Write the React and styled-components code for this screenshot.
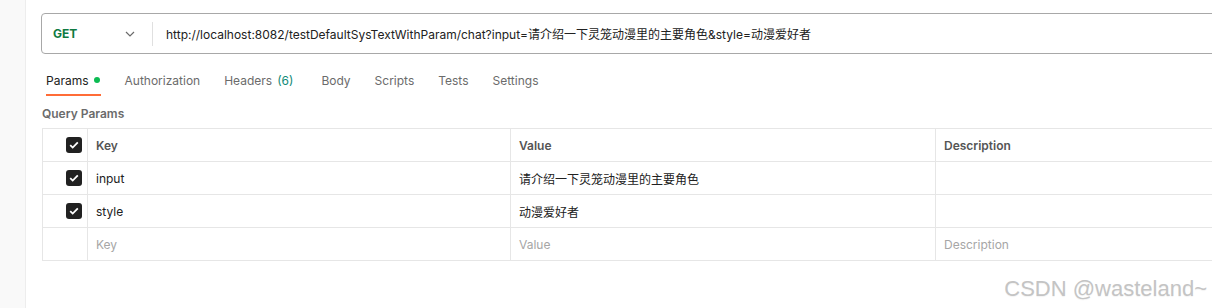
import React from "react";
import styled, { createGlobalStyle } from "styled-components";

const GlobalStyle = createGlobalStyle`
  body {
    margin: 0;
    background: #ffffff;
    font-family: Inter, "Noto Sans CJK SC", sans-serif;
    color: #212121;
  }
`;

const params = [
  { key: "input", value: "请介绍一下灵笼动漫里的主要角色", checked: true },
  { key: "style", value: "动漫爱好者", checked: true },
];

const tabs = ["Params", "Authorization", "Headers", "Body", "Scripts", "Tests", "Settings"];

const App = () => {
  return (
    <Page>
      <GlobalStyle />
      <Sidebar />
      <Main>
        <UrlBar>
          <Method>
            GET
            <svg width="10" height="6" viewBox="0 0 10 6" fill="none">
              <path d="M1 1l4 4 4-4" stroke="#6b6b6b" strokeWidth="1.2" />
            </svg>
          </Method>
          <Divider />
          <UrlText>
            http://localhost:8082/testDefaultSysTextWithParam/chat?input=请介绍一下灵笼动漫里的主要角色&style=动漫爱好者
          </UrlText>
        </UrlBar>

        <Tabs>
          {tabs.map((t) => (
            <Tab key={t} active={t === "Params"}>
              {t}
              {t === "Params" && <Dot />}
              {t === "Headers" && <Count>(6)</Count>}
            </Tab>
          ))}
        </Tabs>

        <SectionTitle>Query Params</SectionTitle>

        <Table>
          <Cell>
            <Check />
          </Cell>
          <Cell head>Key</Cell>
          <Cell head>Value</Cell>
          <Cell head>Description</Cell>

          {params.map((p) => (
            <React.Fragment key={p.key}>
              <Cell>
                <Check />
              </Cell>
              <Cell>{p.key}</Cell>
              <Cell>{p.value}</Cell>
              <Cell />
            </React.Fragment>
          ))}

          <Cell />
          <Cell placeholder>Key</Cell>
          <Cell placeholder>Value</Cell>
          <Cell placeholder>Description</Cell>
        </Table>
      </Main>
      <Watermark>CSDN @wasteland~</Watermark>
    </Page>
  );
};

const Check = () => (
  <CheckBox>
    <svg width="10" height="8" viewBox="0 0 10 8" fill="none">
      <path d="M1.2 4.2l2.5 2.4L8.8 1.4" stroke="#ffffff" strokeWidth="1.8" />
    </svg>
  </CheckBox>
);

export default App;

const Page = styled.div`
  position: relative;
  display: flex;
  width: 1212px;
  height: 308px;
  overflow: hidden;
`;

const Sidebar = styled.div`
  width: 25px;
  flex-shrink: 0;
  background: #f9f9f9;
  border-right: 1px solid #ededed;
`;

const Main = styled.div`
  flex: 1;
  min-width: 0;
  padding: 13px 0 0 15px;
  overflow: hidden;
`;

const UrlBar = styled.div`
  display: flex;
  align-items: center;
  width: 1220px;
  height: 39px;
  border: 1px solid #a8a8a8;
  border-radius: 4px;
`;

const Method = styled.div`
  width: 110px;
  display: flex;
  align-items: center;
  justify-content: space-between;
  padding: 0 17px 0 11px;
  box-sizing: border-box;
  font-size: 12px;
  font-weight: 700;
  color: #0f7a42;
`;

const Divider = styled.div`
  width: 1px;
  height: 24px;
  background: #e0e0e0;
`;

const UrlText = styled.div`
  padding-left: 13px;
  font-size: 12px;
  color: #212121;
  white-space: nowrap;
`;

const Tabs = styled.div`
  display: flex;
  gap: 24px;
  margin: 12px 0 0 5px;
`;

const Tab = styled.div`
  display: flex;
  align-items: center;
  height: 28px;
  font-size: 12px;
  color: ${(p) => (p.active ? "#212121" : "#6b6b6b")};
  border-bottom: 2px solid ${(p) => (p.active ? "#ff6c37" : "transparent")};
  white-space: nowrap;
`;

const Dot = styled.span`
  width: 6px;
  height: 6px;
  border-radius: 50%;
  background: #0cbb52;
  margin: 0 1px 0 5px;
`;

const Count = styled.span`
  color: #0f8a78;
  margin: 0 4px 0 5px;
`;

const SectionTitle = styled.div`
  margin: 10px 0 0 1px;
  font-size: 12px;
  font-weight: 600;
  color: #6b6b6b;
  line-height: 16px;
`;

const Table = styled.div`
  display: grid;
  grid-template-columns: 45px 423px 425px 300px;
  grid-auto-rows: 33px;
  margin: 6px 0 0 1px;
  border-top: 1px solid #e6e6e6;
  border-left: 1px solid #e6e6e6;
  width: 1193px;
`;

const Cell = styled.div`
  display: flex;
  align-items: center;
  justify-content: ${(p) => (p.children && !p.head && !p.placeholder && typeof p.children !== "string" ? "flex-end" : "flex-start")};
  padding: 0 ${(p) => (typeof p.children === "string" ? "0 0 8px" : "5px 0 0")};
  box-sizing: border-box;
  border-right: 1px solid #e6e6e6;
  border-bottom: 1px solid #e6e6e6;
  font-size: 12px;
  font-weight: ${(p) => (p.head ? 600 : 400)};
  color: ${(p) => (p.head ? "#555555" : p.placeholder ? "#a6a6a6" : "#212121")};
  white-space: nowrap;
`;

const CheckBox = styled.div`
  width: 16px;
  height: 16px;
  border-radius: 3px;
  background: #212121;
  display: flex;
  align-items: center;
  justify-content: center;
`;

const Watermark = styled.div`
  position: absolute;
  right: 5px;
  top: 276px;
  font-family: "Liberation Sans", Arial, sans-serif;
  font-size: 22px;
  color: #c4c4c4;
  text-shadow: 0 1px 1px rgba(0, 0, 0, 0.05);
`;
